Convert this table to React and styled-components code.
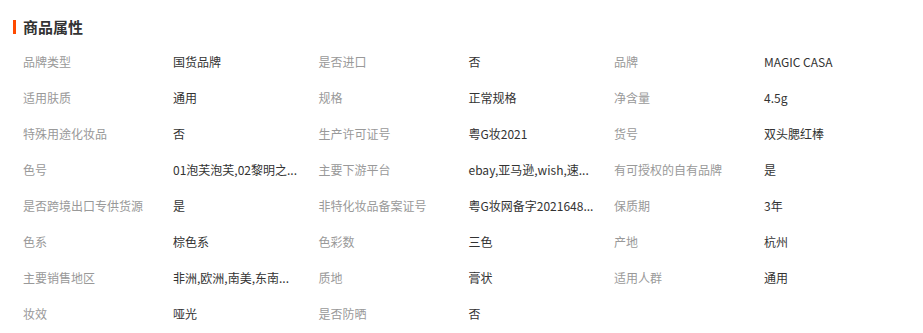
import styled, { createGlobalStyle } from "styled-components";

const GlobalStyle = createGlobalStyle`
  body {
    margin: 0;
    background: #fff;
    font-family: "Noto Sans CJK SC", "Microsoft YaHei", sans-serif;
  }
`;

// long values are shown already shortened, as the page shows them
const attributes = [
  ["品牌类型", "国货品牌"],
  ["是否进口", "否"],
  ["品牌", "MAGIC CASA"],
  ["适用肤质", "通用"],
  ["规格", "正常规格"],
  ["净含量", "4.5g"],
  ["特殊用途化妆品", "否"],
  ["生产许可证号", "粤G妆2021"],
  ["货号", "双头腮红棒"],
  ["色号", "01泡芙泡芙,02黎明之..."],
  ["主要下游平台", "ebay,亚马逊,wish,速..."],
  ["有可授权的自有品牌", "是"],
  ["是否跨境出口专供货源", "是"],
  ["非特化妆品备案证号", "粤G妆网备字2021648..."],
  ["保质期", "3年"],
  ["色系", "棕色系"],
  ["色彩数", "三色"],
  ["产地", "杭州"],
  ["主要销售地区", "非洲,欧洲,南美,东南..."],
  ["质地", "膏状"],
  ["适用人群", "通用"],
  ["妆效", "哑光"],
  ["是否防晒", "否"],
];

function App() {
  return (
    <>
      <GlobalStyle />
      <Section>
        <Title>商品属性</Title>
        <Grid>
          {attributes.map(([label, value]) => (
            <Item key={label}>
              <Label>{label}</Label>
              <Value>{value}</Value>
            </Item>
          ))}
        </Grid>
      </Section>
    </>
  );
}

export default App;

const Section = styled.section`
  width: 923px;
  padding: 17px 0 0 13px;
  box-sizing: border-box;
`;

const Title = styled.h3`
  margin: 0;
  height: 20px;
  line-height: 20px;
  padding-left: 10px;
  font-size: 15px;
  font-weight: bold;
  color: #333;
  display: flex;
  align-items: center;
  position: relative;

  &::before {
    content: "";
    position: absolute;
    left: 0;
    top: 3px;
    width: 3px;
    height: 14px;
    background: #ff4a00;
  }
`;

const Grid = styled.div`
  display: grid;
  grid-template-columns: repeat(3, 295.5px);
  padding: 6px 0 0 10px;
`;

const Item = styled.div`
  display: flex;
  height: 36px;
  align-items: center;
  font-size: 12px;
`;

const Label = styled.span`
  width: 150px;
  flex-shrink: 0;
  color: #999;
`;

const Value = styled.span`
  color: #333;
  white-space: nowrap;
`;
